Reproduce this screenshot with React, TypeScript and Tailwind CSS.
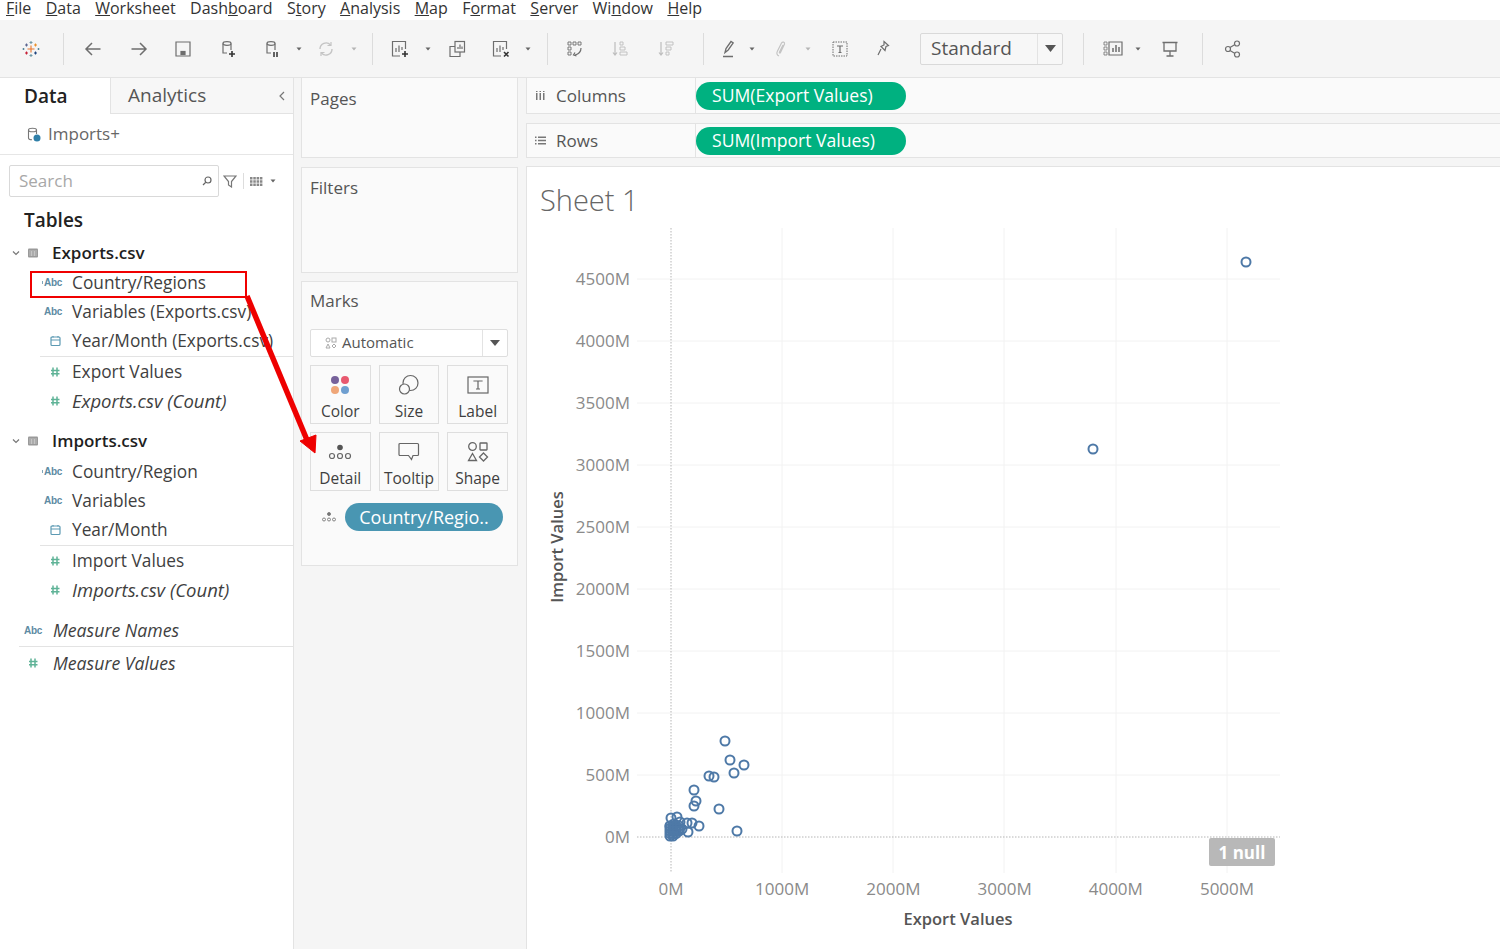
import React from "react";

const FONT = "font-['Open_Sans','Noto_Sans',sans-serif]";

const Sep = ({ className = "" }: { className?: string }) => <div className={`w-px h-[32px] bg-[#dcdcdc] shrink-0 ${className}`} />;
const Drop = ({ className = "", light = false }: { className?: string; light?: boolean }) => (
  <svg width="6" height="4" viewBox="0 0 6 4" className={`shrink-0 ${className}`}>
    <path d="M0.500 0.500h5L3 3.500z" fill={light ? "#b5b5b5" : "#666"} />
  </svg>
);
const Ico = ({ className = "", children }: { className?: string; children: React.ReactNode }) => (
  <svg width="20" height="20" viewBox="0 0 20 20" fill="none" stroke="#6e6e6e" strokeWidth="1.200" className={`shrink-0 ${className}`}>
    {children}
  </svg>
);

const Logo = () => (
  <svg width="20" height="20" viewBox="0 0 20 20" className="ml-[21px] shrink-0" strokeWidth="1.100">
    <path d="M10 6.500v7M6.500 10h7" stroke="#e8762c" />
    <path d="M5.500 4.500v3M4 6h3" stroke="#5b6591" />
    <path d="M14.500 4.500v3M13 6h3" stroke="#eb912b" />
    <path d="M5.500 12.500v3M4 14h3" stroke="#c72037" />
    <path d="M14.500 12.500v3M13 14h3" stroke="#1f447e" />
    <path d="M10 2v3M8.500 3.500h3M10 15v3M8.500 16.500h3" stroke="#7099a6" />
    <path d="M2.500 9v2M1.500 10h2M17.500 9v2M16.500 10h2" stroke="#59879b" />
  </svg>
);

const AbcIcon = ({ geo = false }: { geo?: boolean }) => (
  <span className="w-[20px] shrink-0 flex items-center justify-end text-[10px] font-bold leading-none text-[#5d8ba3] tracking-[-0.3px] font-['Liberation_Sans',sans-serif]">
    {geo && <span className="w-[3px] h-[3px] bg-[#7fa5b8] mr-[1px]" />}Abc
  </span>
);
const HashIcon = () => (
  <svg width="20" height="12" viewBox="0 0 20 12" fill="none" stroke="#5fb397" strokeWidth="1.500" className="shrink-0">
    <path d="M11 1.500v9M15 1.500v9M9 4.500h8.500M9 7.800h8.500" />
  </svg>
);
const CalIcon = () => (
  <svg width="20" height="12" viewBox="0 0 20 12" fill="none" stroke="#5d9ab3" strokeWidth="1.200" className="shrink-0">
    <rect x="9" y="2" width="9" height="8.500" rx="1" />
    <path d="M9 5h9M11 1v1.500M16 1v1.500" />
  </svg>
);
const TableIcon = () => (
  <svg width="12" height="10" viewBox="0 0 12 10" className="shrink-0">
    <rect x="1" y="0.500" width="10" height="9" rx="1" fill="#9a9a9a" />
    <path d="M2 3h8M2 5h8M2 7h8M4.500 3v5M7.500 3v5" stroke="#d6d6d6" strokeWidth="0.600" />
  </svg>
);
const Chevron = () => (
  <svg width="8" height="6" viewBox="0 0 8 6" fill="none" stroke="#777" strokeWidth="1.200" className="shrink-0">
    <path d="M1 1.500l3 3 3-3" />
  </svg>
);

const Field = ({ icon, label, italic = false }: { icon: React.ReactNode; label: string; italic?: boolean }) => (
  <div className="flex items-center pl-[42px] h-[29px]">
    <div className="w-[20px] shrink-0 flex items-center justify-end">{icon}</div>
    <span className={`ml-[10px] text-[#3f3f3f] whitespace-nowrap ${italic ? "italic text-[18.5px]" : "text-[17.300px]"}`}>{label}</span>
  </div>
);

const TableHead = ({ name }: { name: string }) => (
  <div className="flex items-center pl-[12px] h-[24px]">
    <Chevron />
    <div className="ml-[7px]"><TableIcon /></div>
    <span className="ml-[13px] text-[17px] font-semibold text-[#1f1f1f]">{name}</span>
  </div>
);

const MarkBtn = ({ icon, label }: { icon: React.ReactNode; label: string }) => (
  <div className="h-[59px] border border-[#dedede] flex flex-col items-center pt-[5px]">
    <div className="h-[28px] flex items-center justify-center">{icon}</div>
    <span className="text-[15.500px] leading-[20px] text-[#3f3f3f] mt-[2px]">{label}</span>
  </div>
);

const Shelf = ({ icon, label, pill, className = "" }: { icon: React.ReactNode; label: string; pill: string; className?: string }) => (
  <div className={`flex border-y border-[#e3e3e3] bg-[#fafafa] ${className}`}>
    <div className="w-[170px] flex items-center border-r border-[#e3e3e3] border-l pl-[8px] shrink-0">
      <div className="w-[14px] flex">{icon}</div>
      <span className="ml-[7px] text-[17px] text-[#555]">{label}</span>
    </div>
    <div className="h-[28px] my-auto w-[210px] rounded-full bg-[#00b180] text-white text-[17.600px] font-medium flex items-center pl-[16px]">{pill}</div>
  </div>
);

const yTicks = ["4500M", "4000M", "3500M", "3000M", "2500M", "2000M", "1500M", "1000M", "500M", "0M"];
const xTicks = ["0M", "1000M", "2000M", "3000M", "4000M", "5000M"];
const points = [
  [1246, 262], [1093, 449], [725, 741], [730, 760], [744, 765], [734, 773], [709, 776], [714, 777],
  [694, 790], [696, 801], [694, 806], [719, 809], [737, 831], [699, 826], [692, 823], [687, 823], [688, 832],
  [671, 818], [677, 817], [680, 822], [674, 824], [670, 826], [676, 828], [682, 829],
];
// dense lump of small countries near the origin
const lump: number[][] = [];
for (let y = 826; y <= 837; y += 2.5) {
  for (let x = 670; x <= 680 - Math.max(0, y - 830); x += 3) lump.push([x, y]);
}

const Chart = () => (
  <svg viewBox="527 228 972 720" width="972" height="720" className="block">
    {[279, 341, 403, 465, 527, 589, 651, 713, 775].map((y) => (
      <line key={y} x1="637" x2="1280" y1={y} y2={y} stroke="#f2f2f2" />
    ))}
    {[782, 893, 1004, 1116, 1227].map((x) => (
      <line key={x} x1={x} x2={x} y1="228" y2="873" stroke="#f2f2f2" />
    ))}
    <line x1="637" x2="1280" y1="837" y2="837" stroke="#b5b5b5" strokeDasharray="1.500 1.500" />
    <line x1="671" x2="671" y1="228" y2="873" stroke="#b5b5b5" strokeDasharray="1.500 1.500" />
    {yTicks.map((t, i) => (
      <text key={t} x="630" y={285 + i * 62} textAnchor="end" fontSize="17" fill="#8a8a8a">{t}</text>
    ))}
    {xTicks.map((t, i) => (
      <text key={t} x={671 + i * 111.200} y="895" textAnchor="middle" fontSize="17" fill="#8a8a8a">{t}</text>
    ))}
    <text x="958" y="925" textAnchor="middle" fontSize="16.500" fontWeight="600" fill="#555">Export Values</text>
    <text transform="translate(563 547) rotate(-90)" textAnchor="middle" fontSize="16.500" fontWeight="600" fill="#555">Import Values</text>
    {[...points, ...lump].map(([x, y], i) => (
      <circle key={i} cx={x} cy={y} r="4.500" fill="none" stroke="#4e79a7" strokeWidth="2" />
    ))}
  </svg>
);

export default function App() {
  return (
    <div className={`relative w-[1500px] h-[949px] overflow-hidden bg-[#f5f5f5] ${FONT}`}>
      {/* menu */}
      <div className="h-[20px] bg-white flex items-start pl-[6px] gap-[14.400px] text-[16px] leading-[17px] text-[#333]">
        <span><u>F</u>ile</span>
        <span><u>D</u>ata</span>
        <span><u>W</u>orksheet</span>
        <span>Dash<u>b</u>oard</span>
        <span>S<u>t</u>ory</span>
        <span><u>A</u>nalysis</span>
        <span><u>M</u>ap</span>
        <span>F<u>o</u>rmat</span>
        <span><u>S</u>erver</span>
        <span>Wi<u>n</u>dow</span>
        <span><u>H</u>elp</span>
      </div>

      {/* toolbar */}
      <div className="h-[57px] flex items-center">
        <Logo />
        <Sep className="ml-[22px]" />
        <Ico className="ml-[19px]"><path d="M17.500 10H3M9 4l-6 6 6 6" strokeWidth="1.500" /></Ico>
        <Ico className="ml-[26px]"><path d="M2.500 10H17M11 4l6 6-6 6" strokeWidth="1.500" /></Ico>
        <Ico className="ml-[24px]"><path d="M3 3h14v14H3z" /><rect x="8" y="12.500" width="4" height="3" fill="#6e6e6e" /></Ico>
        <Ico className="ml-[25px]"><ellipse cx="9" cy="4.500" rx="4" ry="1.800" /><path d="M5 4.500V14h4M13 4.500V11" /><path d="M14 12v6M11 15h6" stroke="#333" strokeWidth="1.600" /></Ico>
        <Ico className="ml-[24px]"><ellipse cx="9" cy="4.500" rx="4" ry="1.800" /><path d="M5 4.500V14h4M13 4.500V11" /><path d="M12 13v5M15 13v5" stroke="#333" strokeWidth="1.500" /></Ico>
        <Drop className="ml-[14px]" />
        <Ico className="ml-[14px]"><path d="M4 10a6 6 0 0 1 10.500-4M16 10a6 6 0 0 1-10.500 4" stroke="#c4c4c4" strokeWidth="1.400" /><path d="M15 3v3.500h-3.500M5 17v-3.500h3.500" stroke="#c4c4c4" /></Ico>
        <Drop light className="ml-[15px]" />
        <Sep className="ml-[15px]" />
        <Ico className="ml-[17px]"><path d="M10 17H2.500V2.500h13V10" /><path d="M6 13V9M9 13V6.500M12 11V8" /><path d="M15 12v6M12 15h6" stroke="#333" strokeWidth="1.600" /></Ico>
        <Drop className="ml-[15px]" />
        <Ico className="ml-[16px]"><path d="M8 7.500H3v10h10V13" /><rect x="8" y="2.500" width="9.500" height="10.500" /><path d="M11 10V8M13 10V5.500M15 10V7.500" /></Ico>
        <Ico className="ml-[24px]"><path d="M10 17H2.500V2.500h13V10" /><path d="M6 13V9M9 13V6.500M12 11V8" /><path d="M13 13l4.500 4.500M17.500 13L13 17.500" stroke="#333" strokeWidth="1.600" /></Ico>
        <Drop className="ml-[14px]" />
        <Sep className="ml-[16px]" />
        <Ico className="ml-[17px]"><path d="M3 3h3v3H3zM8 3h3v3H8zM13 3h3v3h-3zM3 8h3v3H3zM3 13h3v3H3z" strokeWidth="0.900" /><path d="M16 9c0 4-2 6-6 7M10 13.500L8.500 16l3 1" strokeWidth="1.200" /></Ico>
        <Ico className="ml-[25px]"><path d="M5 3v13M3 13.500L5 16l2-2.500" stroke="#bdbdbd" /><path d="M10 3h3v3h-3zM10 8h5v3h-5zM10 13h7v3h-7z" stroke="#bdbdbd" strokeWidth="0.900" /></Ico>
        <Ico className="ml-[26px]"><path d="M5 3v13M3 13.500L5 16l2-2.500" stroke="#bdbdbd" /><path d="M10 3h7v3h-7zM10 8h5v3h-5zM10 13h3v3h-3z" stroke="#bdbdbd" strokeWidth="0.900" /></Ico>
        <Sep className="ml-[27px]" />
        <Ico className="ml-[14px]"><path d="M7 13.500l1-4L13 2.500l2.200 1.500-5 7zM5 17.500h10" strokeWidth="1.300" /></Ico>
        <Drop className="ml-[11px]" />
        <Ico className="ml-[17px]"><path d="M7 17c-2.500-1-2.500-3-1.500-5l4-8c1-1.500 3.500-1 3 1l-4 8.500c-.5 1-1.500.5-1-.5l3.500-7" stroke="#c4c4c4" /></Ico>
        <Drop light className="ml-[13px]" />
        <Ico className="ml-[19px]"><rect x="3" y="3" width="14" height="14" strokeDasharray="1.500 1" strokeWidth="1" /><path d="M7 7h6M10 7v6.500M8.500 13.500h3" /></Ico>
        <Ico className="ml-[23px]"><path d="M11 2.500l4.500 4-2.500 1-1 4-4-4 3-1.500zM8 10l-3 6" strokeWidth="1.200" /></Ico>
        <div className="ml-[27px] w-[143px] h-[32px] rounded-[2px] border border-[#d9d9d9] bg-[#f7f7f7] flex shrink-0">
          <div className="flex-1 pl-[10px] flex items-center text-[19px] text-[#555]">Standard</div>
          <div className="w-[25px] border-l border-[#e3e3e3] flex items-center justify-center"><svg width="11" height="7" viewBox="0 0 11 7"><path d="M0 0h11L5.500 7z" fill="#555" /></svg></div>
        </div>
        <Sep className="ml-[20px]" />
        <Ico className="ml-[19px]"><path d="M1 3h3v3H1zM1 8h3v3H1zM1 13h3v3H1z" strokeWidth="0.800" /><path d="M6 3h13v13H6z" /><path d="M10 13V9M13 13V6M16 13v-5" strokeWidth="1.500" /></Ico>
        <Drop className="ml-[12px]" />
        <Ico className="ml-[19px]"><path d="M2.500 3.500h15M4 3.500V12h12V3.500M10 12v5M6.500 17h7" strokeWidth="1.300" /></Ico>
        <Sep className="ml-[22px]" />
        <Ico className="ml-[20px]"><circle cx="5" cy="10" r="2.500" /><circle cx="14" cy="4.500" r="2.500" /><circle cx="14" cy="15.500" r="2.500" /><path d="M7 8.500l5-3M7 11.500l5 3" /></Ico>
      </div>

      {/* main */}
      <div className="h-[872px] flex border-t border-[#e3e3e3]">
        {/* data pane */}
        <div className="w-[294px] shrink-0 bg-white border-r border-[#e3e3e3]">
          <div className="flex h-[36px]">
            <div className="w-[110px] pl-[24px] flex items-center text-[19px] font-semibold text-[#222]">Data</div>
            <div className="flex-1 bg-[#f7f7f7] border-l border-b border-[#e3e3e3] flex items-center pl-[17px] text-[19px] text-[#555]">
              Analytics
              <svg width="6" height="10" viewBox="0 0 6 10" fill="none" stroke="#777" strokeWidth="1.200" className="ml-auto mr-[8px]"><path d="M5 1L1 5l4 4" /></svg>
            </div>
          </div>
          <div className="h-[41px] border-b border-[#e6e6e6] flex items-center pl-[27px]">
            <svg width="14" height="15" viewBox="0 0 14 15" fill="none" stroke="#777" strokeWidth="1.100">
              <ellipse cx="5.500" cy="3" rx="4" ry="1.800" />
              <path d="M1.500 3v8c0 1 1.500 1.800 3.500 1.800M9.500 3v4" />
              <circle cx="10" cy="11" r="3.500" fill="#2f7fa8" stroke="none" />
            </svg>
            <span className="ml-[7px] text-[17px] text-[#666]">Imports+</span>
          </div>
          <div className="flex items-center mt-[10px] pl-[9px] h-[32px]">
            <div className="w-[210px] h-[32px] rounded-[2px] border border-[#d9d9d9] flex items-center pl-[9px] pr-[5px] text-[17px] text-[#a8a8a8]">
              Search
              <svg width="12" height="12" viewBox="0 0 12 12" fill="none" stroke="#666" strokeWidth="1.200" className="ml-auto"><circle cx="7" cy="5" r="3" /><path d="M4.800 7.300L2 10" /></svg>
            </div>
            <svg width="14" height="13" viewBox="0 0 14 13" fill="none" stroke="#777" strokeWidth="1.200" className="ml-[4px]"><path d="M1 1h12L8.500 6.500V12l-3-2V6.500z" /></svg>
            <div className="w-px h-[16px] bg-[#ddd] ml-[6px]" />
            <svg width="13" height="10" viewBox="0 0 13 10" className="ml-[6px] mt-[1px]"><path d="M0 0h2.500v2.500H0zM3.300 0h2.500v2.500H3.300zM6.600 0h2.500v2.500H6.600zM9.900 0h2.500v2.500H9.900zM0 3.300h2.500v2.500H0zM3.300 3.300h2.500v2.500H3.300zM6.600 3.300h2.500v2.500H6.600zM9.900 3.300h2.500v2.500H9.900zM0 6.600h2.500v2.500H0zM3.300 6.600h2.500v2.500H3.300zM6.600 6.600h2.500v2.500H6.600zM9.900 6.600h2.500v2.500H9.900z" fill="#888" /></svg>
            <Drop className="ml-[7px]" />
          </div>
          <div className="pl-[24px] mt-[9px] h-[28px] flex items-center text-[19px] font-semibold text-[#222]">Tables</div>
          <div className="mt-[7px]"><TableHead name="Exports.csv" /></div>
          <div className="mt-[3px]">
            <Field icon={<AbcIcon geo />} label="Country/Regions" />
            <Field icon={<AbcIcon />} label="Variables (Exports.csv)" />
            <Field icon={<CalIcon />} label="Year/Month (Exports.csv)" />
            <div className="ml-[40px] h-px bg-[#e3e3e3] mt-[1px]" />
            <Field icon={<HashIcon />} label="Export Values" />
            <Field icon={<HashIcon />} label="Exports.csv (Count)" italic />
          </div>
          <div className="mt-[14px]"><TableHead name="Imports.csv" /></div>
          <div className="mt-[4px]">
            <Field icon={<AbcIcon geo />} label="Country/Region" />
            <Field icon={<AbcIcon />} label="Variables" />
            <Field icon={<CalIcon />} label="Year/Month" />
            <div className="ml-[40px] h-px bg-[#e3e3e3] mt-[1px]" />
            <Field icon={<HashIcon />} label="Import Values" />
            <Field icon={<HashIcon />} label="Imports.csv (Count)" italic />
          </div>
          <div className="mt-[12px] flex items-center pl-[22px] h-[29px]">
            <AbcIcon />
            <span className="ml-[11px] text-[17.700px] italic text-[#3f3f3f]">Measure Names</span>
          </div>
          <div className="ml-[19px] h-px bg-[#e3e3e3] mt-[1px]" />
          <div className="flex items-center pl-[20px] h-[32px]">
            <HashIcon />
            <span className="ml-[13px] text-[17.700px] italic text-[#3f3f3f]">Measure Values</span>
          </div>
        </div>

        {/* cards */}
        <div className="w-[217px] ml-[7px] shrink-0 flex flex-col">
          <div className="h-[80px] border border-[#e3e3e3] border-t-0 bg-[#fafafa] pl-[8px] pt-[8px] text-[17px] text-[#555]">Pages</div>
          <div className="h-[106px] mt-[9px] border border-[#e3e3e3] bg-[#fafafa] pl-[8px] pt-[7px] text-[17px] text-[#555]">Filters</div>
          <div className="h-[285px] mt-[8px] border border-[#e3e3e3] bg-[#fafafa] pl-[8px] pr-[9px] pt-[7px]">
            <div className="text-[17px] text-[#555] h-[24px] leading-[24px]">Marks</div>
            <div className="mt-[16px] h-[28px] rounded-[2px] border border-[#dedede] bg-white flex items-center">
              <svg width="12" height="12" viewBox="0 0 12 12" fill="none" stroke="#aaa" strokeWidth="1" className="ml-[14px]"><circle cx="3" cy="3" r="2" /><rect x="7" y="1" width="4" height="4" /><path d="M3 7l2 4H1zM9 7l2 2-2 2-2-2z" /></svg>
              <span className="ml-[5px] text-[15px] leading-[20px] -mt-[2px] text-[#555]">Automatic</span>
              <div className="ml-auto w-[25px] h-full border-l border-[#e3e3e3] flex items-center justify-center"><svg width="10" height="6" viewBox="0 0 10 6"><path d="M0 0h10L5 6z" fill="#555" /></svg></div>
            </div>
            <div className="grid grid-cols-3 gap-x-[8px] gap-y-[8px] mt-[8px]">
              <MarkBtn label="Color" icon={<svg width="20" height="20" viewBox="0 0 20 20"><circle cx="5" cy="5" r="4" fill="#76619a" /><circle cx="15" cy="5" r="4" fill="#e8596f" /><circle cx="5" cy="15" r="4" fill="#efa678" /><circle cx="15" cy="15" r="4" fill="#6f9fd0" /></svg>} />
              <MarkBtn label="Size" icon={<svg width="22" height="22" viewBox="0 0 22 22" fill="none" stroke="#666" strokeWidth="1.200"><circle cx="12.500" cy="9" r="7.500" /><circle cx="6.500" cy="15" r="5" fill="#fafafa" /></svg>} />
              <MarkBtn label="Label" icon={<svg width="22" height="20" viewBox="0 0 22 20" fill="none" stroke="#666" strokeWidth="1.200"><rect x="1" y="2" width="20" height="16" /><path d="M7 6.500V6h8v.5M11 6v8M9 14h4" /></svg>} />
              <MarkBtn label="Detail" icon={<svg width="24" height="16" viewBox="0 0 24 16" fill="none" stroke="#666" strokeWidth="1.200"><circle cx="12" cy="3.500" r="2.800" fill="#555" stroke="none" /><circle cx="4" cy="12" r="2.500" /><circle cx="12" cy="12" r="2.500" /><circle cx="20" cy="12" r="2.500" /></svg>} />
              <MarkBtn label="Tooltip" icon={<svg width="22" height="20" viewBox="0 0 22 20" fill="none" stroke="#666" strokeWidth="1.200"><path d="M2.500 1.500h17a1 1 0 0 1 1 1v10a1 1 0 0 1-1 1h-4.500l-1.500 4-3-4h-8.500a1 1 0 0 1-1-1v-10a1 1 0 0 1 1-1z" /></svg>} />
              <MarkBtn label="Shape" icon={<svg width="22" height="22" viewBox="0 0 22 22" fill="none" stroke="#666" strokeWidth="1.300"><circle cx="5.500" cy="5.500" r="3.800" /><rect x="13" y="2" width="7" height="7" rx="0.500" /><path d="M5.500 12.500l4 7h-8zM16.500 12l4 4-4 4-4-4z" /></svg>} />
            </div>
            <div className="mt-[12px] flex items-center">
              <svg width="14" height="10" viewBox="0 0 14 10" fill="none" stroke="#777" strokeWidth="0.900" className="ml-[12px]"><circle cx="7" cy="2" r="1.500" fill="#777" /><circle cx="2" cy="7.500" r="1.500" /><circle cx="7" cy="7.500" r="1.500" /><circle cx="12" cy="7.500" r="1.500" /></svg>
              <div className="ml-[9px] w-[158px] h-[28px] rounded-full bg-[#4996b2] text-white text-[18px] flex items-center justify-center whitespace-nowrap">Country/Regio..</div>
            </div>
          </div>
        </div>

        {/* shelves + view */}
        <div className="flex-1 ml-[8px] flex flex-col min-w-0">
          <Shelf
            label="Columns"
            pill="SUM(Export Values)"
            className="h-[36px] border-t-0"
            icon={<svg width="11" height="11" viewBox="0 0 11 11" fill="#777"><path d="M1 3h1.500v7H1zM4.500 3H6v7H4.500zM8 3h1.500v7H8zM1 1h1.500v1H1zM4.500 1H6v1H4.500zM8 1h1.500v1H8z" /></svg>}
          />
          <Shelf
            label="Rows"
            pill="SUM(Import Values)"
            className="h-[35px] mt-[9px]"
            icon={<svg width="11" height="11" viewBox="0 0 11 11" fill="#777"><path d="M0 1.500h1.500V3H0zM3 1.500h8V3H3zM0 4.800h1.500v1.500H0zM3 4.800h8v1.500H3zM0 8h1.500v1.500H0zM3 8h8v1.500H3z" /></svg>}
          />
          <div className="relative flex-1 mt-[8px] bg-white border-l border-t border-[#e3e3e3]">
            <div className="pl-[13px] pt-[15px] h-[61px] text-[29px] font-light leading-[36px] text-[#666]">Sheet 1</div>
            <Chart />
            <div className="absolute left-[682px] top-[671px] w-[66px] h-[28px] pt-[1px] bg-[#b8b8b8] rounded-[2px] text-white font-bold text-[17px] flex items-center justify-center">1 null</div>
          </div>
        </div>
      </div>

      {/* annotation over the screenshot */}
      <div className="absolute left-[30px] top-[271px] w-[217px] h-[27px] border-2 border-[#f00000]" />
      <svg className="absolute left-0 top-0 pointer-events-none" width="1500" height="949" viewBox="0 0 1500 949">
        <path d="M247 296L307 440" stroke="#ee0000" strokeWidth="5.500" />
        <path d="M300 441L316 435L315 453z" fill="#ee0000" stroke="#ee0000" strokeWidth="1" />
      </svg>
    </div>
  );
}
